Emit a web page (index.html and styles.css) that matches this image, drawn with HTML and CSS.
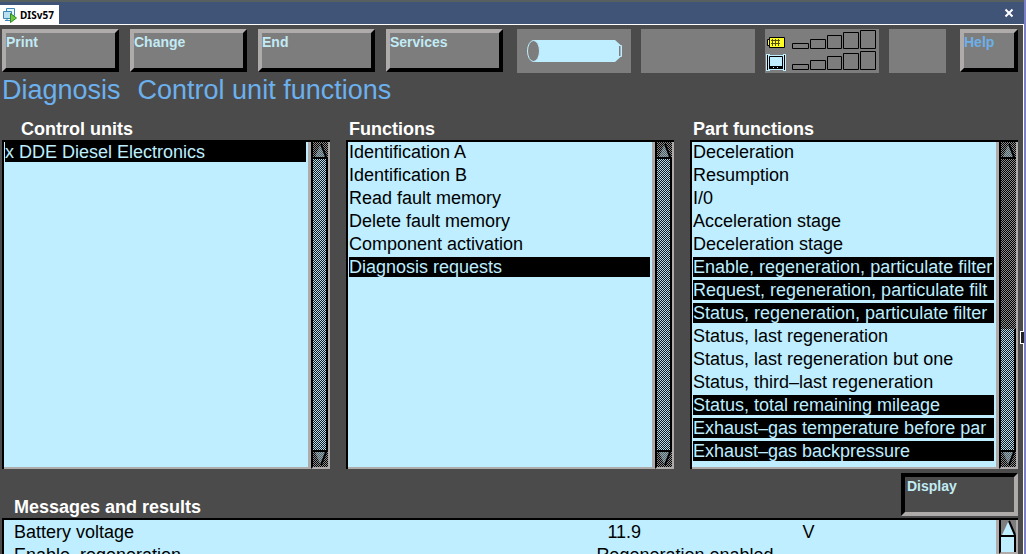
FILE: index.html
```html
<!DOCTYPE html>
<html lang="en">
<head>
<meta charset="utf-8">
<title>DISv57</title>
<link rel="stylesheet" href="styles.css">
</head>
<body>
<div class="app">
<header class="tabs">
  <button class="tab" type="button">
    <svg class="tab-icon" width="16" height="16" viewBox="0 0 16 16" aria-hidden="true">
      <path d="M4.500 1.500h8v7h-8z" fill="#e4f5fb" stroke="#3b86b5"/>
      <path d="M1.500 4.500h8v7h-8z" fill="#b9e0f0" stroke="#3b86b5"/>
      <path d="M3 13.500h6M5 11.500v2" stroke="#3b86b5"/>
      <path d="M8.500 6.500l6 4.500-6 4.500z" fill="#6cc83c" stroke="#2f8a28"/>
    </svg>
    <span>DISv57</span>
  </button>
  <button class="close" type="button" aria-label="Close">
    <svg width="10" height="10" viewBox="0 0 10 10" aria-hidden="true"><path d="M1.500 1.500l7 7M8.500 1.500l-7 7" stroke="#fff" stroke-width="2"/></svg>
  </button>
</header>
<main class="content">
  <div class="toolbar">
    <div class="actions">
      <button class="key" type="button">Print</button>
      <button class="key" type="button">Change</button>
      <button class="key" type="button">End</button>
      <button class="key" type="button">Services</button>
    </div>
    <div class="panels">
      <div class="panel">
        <svg width="114" height="44" viewBox="0 0 114 44" aria-hidden="true">
          <path d="M16 11H98L103.500 16V28L98 33H16z" fill="#beeeff"/>
          <ellipse cx="16.500" cy="22" rx="6" ry="10.500" fill="#7d7d7d" stroke="#beeeff"/>
          <path d="M103 16.500h1.500v11H103" fill="none" stroke="#beeeff"/>
          <path d="M102.500 17v10" stroke="#7d7d7d"/>
        </svg>
      </div>
      <div class="panel"></div>
      <div class="panel">
        <svg width="114" height="44" viewBox="0 0 114 44" aria-hidden="true">
          <path d="M4.500 8.500h15v10h-15z" fill="#ffff20" stroke="#000"/>
          <path d="M2.500 10.500h2v6h-2z" fill="#ffff20" stroke="#000"/>
          <path d="M7.500 10v7M10.500 10v7M13.500 10v7M6 11.500h9M6 14.500h9" stroke="#554d00"/>
          <path d="M1 25h4v1h13v-1h3v17h-3v-1H5v1H1z" fill="#beeeff"/>
          <path d="M2.500 26v15M19.500 26v15" stroke="#000"/>
          <path d="M4.500 27.500h13v12h-13z" fill="#beeeff" stroke="#000"/>
          <path d="M4 38.500h14" stroke="#000" stroke-width="3"/><path d="M8 38.500h1M12 38.500h1" stroke="#beeeff"/>
          <g fill="none" stroke="#000">
            <path d="M27.500 14.500h16v5h-16zM45.500 10.500h15v9h-15zM62.500 6.500h14v13h-14zM78.500 3.500h15v16h-15zM95.500 1.500h15v18h-15z"/>
            <path d="M27.500 35.500h16v5h-16zM45.500 31.500h15v9h-15zM62.500 27.500h14v13h-14zM78.500 24.500h15v16h-15zM95.500 22.500h15v18h-15z"/>
          </g>
        </svg>
      </div>
      <div class="panel panel-small"></div>
    </div>
    <button class="key key-help" type="button">Help</button>
  </div>

  <h1 class="title"><span>Diagnosis</span><span>Control unit functions</span></h1>

  <div class="columns">
    <section class="column">
      <h2 class="heading heading-indent" id="units">Control units</h2>
      <div class="box">
        <ul class="list" role="listbox" aria-labelledby="units">
          <li role="option" aria-selected="true">x DDE Diesel Electronics</li>
        </ul>
        <div class="scroll">
          <button class="arrow" type="button" aria-label="Up"><svg width="15" height="17" viewBox="0 0 15 17"><path d="M7.500 2L2 15h11z" class="dim"/><path d="M8 2l5 13M0 16h15" class="edge"/></svg></button>
          <div class="thumb"></div>
          <button class="arrow" type="button" aria-label="Down"><svg width="15" height="17" viewBox="0 0 15 17"><path d="M2 2h11L7.500 15z" class="dim"/><path d="M13 2L8 15M0 1h15" class="edge"/></svg></button>
        </div>
      </div>
    </section>
    <section class="column">
      <h2 class="heading" id="functions">Functions</h2>
      <div class="box">
        <ul class="list" role="listbox" aria-labelledby="functions">
          <li role="option">Identification A</li>
          <li role="option">Identification B</li>
          <li role="option">Read fault memory</li>
          <li role="option">Delete fault memory</li>
          <li role="option">Component activation</li>
          <li role="option" aria-selected="true">Diagnosis requests</li>
        </ul>
        <div class="scroll">
          <button class="arrow" type="button" aria-label="Up"><svg width="15" height="17" viewBox="0 0 15 17"><path d="M7.500 2L2 15h11z" class="dim"/><path d="M8 2l5 13M0 16h15" class="edge"/></svg></button>
          <div class="thumb"></div>
          <button class="arrow" type="button" aria-label="Down"><svg width="15" height="17" viewBox="0 0 15 17"><path d="M2 2h11L7.500 15z" class="dim"/><path d="M13 2L8 15M0 1h15" class="edge"/></svg></button>
        </div>
      </div>
    </section>
    <section class="column">
      <h2 class="heading" id="parts">Part functions</h2>
      <div class="box">
        <ul class="list" role="listbox" aria-multiselectable="true" aria-labelledby="parts">
          <li role="option">Deceleration</li>
          <li role="option">Resumption</li>
          <li role="option">I/0</li>
          <li role="option">Acceleration stage</li>
          <li role="option">Deceleration stage</li>
          <li role="option" aria-selected="true">Enable, regeneration, particulate filter</li>
          <li role="option" aria-selected="true">Request, regeneration, particulate filt</li>
          <li role="option" aria-selected="true">Status, regeneration, particulate filter</li>
          <li role="option">Status, last regeneration</li>
          <li role="option">Status, last regeneration but one</li>
          <li role="option">Status, third–last regeneration</li>
          <li role="option" aria-selected="true">Status, total remaining mileage</li>
          <li role="option" aria-selected="true">Exhaust–gas temperature before par</li>
          <li role="option" aria-selected="true">Exhaust–gas backpressure</li>
        </ul>
        <div class="scroll">
          <button class="arrow" type="button" aria-label="Up"><svg width="15" height="17" viewBox="0 0 15 17"><path d="M7.500 2L2 15h11z" class="dim"/><path d="M8 2l5 13M0 16h15" class="edge"/></svg></button>
          <div class="track"></div>
          <div class="thumb"></div>
          <button class="arrow" type="button" aria-label="Down"><svg width="15" height="17" viewBox="0 0 15 17"><path d="M2 2h11L7.500 15z" class="dim"/><path d="M13 2L8 15M0 1h15" class="edge"/></svg></button>
        </div>
      </div>
    </section>
  </div>

  <div class="results-bar">
    <h2 class="heading" id="results">Messages and results</h2>
    <button class="key key-pressed" type="button">Display</button>
  </div>
  <div class="box results">
    <div class="results-body">
      <table class="table" aria-labelledby="results">
        <tbody>
          <tr><td class="name">Battery voltage</td><td class="number">11.9</td><td>V</td></tr>
          <tr><td class="name">Enable, regeneration</td><td class="wide" colspan="2">Regeneration enabled</td></tr>
        </tbody>
      </table>
    </div>
    <div class="scroll">
      <button class="arrow" type="button" aria-label="Up"><svg width="15" height="17" viewBox="0 0 15 17"><path d="M7.500 1L1 15h13z" fill="#beeeff"/><path d="M8 1l6 14M0 16h15" class="edge"/></svg></button>
      <div class="thumb thumb-solid"></div>
    </div>
  </div>
</main>
<div class="handle"></div>
</div>
</body>
</html>
```
FILE: styles.css
```css
:root {
  --ground: #4b4b4b;
  --panel: #7d7d7d;
  --light: #b0abab;
  --ice: #beeeff;
}

* {
  box-sizing: border-box;
}

body {
  margin: 0;
  background: var(--ground);
  font-family: "Liberation Sans", Arial, sans-serif;
  font-size: 18px;
  color: #000;
}

button {
  font: inherit;
  margin: 0;
  padding: 0;
  border: 0;
  background: none;
}

svg {
  display: block;
}

.app {
  position: relative;
  display: flex;
  flex-direction: column;
  height: 100vh;
  overflow: hidden;
  border-right: 2px solid #7b7fc4;
}

.tabs {
  display: flex;
  justify-content: space-between;
  align-items: stretch;
  height: 25px;
  flex: none;
  padding-right: 8px;
  background: #405478;
  border-top: 2px solid #56615f;
  border-bottom: 1px solid #fff;
}

.tab {
  display: flex;
  align-items: center;
  gap: 2px;
  margin-top: 3px;
  padding: 0 5px 0 2px;
  background: #fff;
  font-family: "Noto Sans", sans-serif;
  font-size: 10px;
  font-weight: bold;
}

.close {
  padding: 0 2px;
}

.content {
  display: flex;
  flex-direction: column;
  flex: 1;
  min-height: 0;
  padding: 4px 5px 0 2px;
  border-right: 1px solid #fff;
}

.toolbar {
  display: flex;
  justify-content: space-between;
  height: 44px;
  flex: none;
}

.actions {
  display: flex;
  gap: 11px;
}

.panels {
  display: flex;
  gap: 10px;
}

.panel {
  width: 114px;
  background: var(--panel);
}

.panel-small {
  width: 57px;
}

.key {
  display: flex;
  width: 117px;
  height: 43px;
  border: 4px solid;
  border-color: var(--light) #000 #000 var(--light);
  background: var(--panel);
  color: #c2ebf5;
  font-size: 14px;
  line-height: 18px;
  font-weight: bold;
  text-align: left;
}

.key-help {
  width: 58px;
  color: #6cb0ea;
}

.key-pressed {
  border-color: #000 var(--light) var(--light) #000;
  padding-left: 2px;
  background: var(--ground);
}

.title {
  display: flex;
  gap: 17px;
  margin: 0;
  flex: none;
  color: #6cb0ee;
  font-size: 27px;
  line-height: 34px;
  font-weight: normal;
}

.columns {
  display: grid;
  grid-template-columns: repeat(3, 1fr);
  gap: 16px;
  margin-top: 11px;
}

.column {
  min-width: 0;
}

.heading {
  margin: 0;
  padding-left: 3px;
  color: #fff;
  font-size: 18px;
  line-height: 22px;
  font-weight: bold;
}

.heading-indent {
  padding-left: 19px;
}

.box {
  display: flex;
  background: var(--ice);
  border-top: 2px solid #000;
  border-left: 2px solid #000;
}

.list {
  flex: 1;
  min-width: 0;
  min-height: 327px;
  margin: 0;
  padding: 0 2px 3px 1px;
  list-style: none;
  border-right: 3px solid var(--light);
  border-bottom: 2px solid var(--light);
}

.list li {
  height: 20px;
  margin-bottom: 3px;
  line-height: 20px;
  white-space: nowrap;
  overflow: hidden;
}

.list li[aria-selected="true"] {
  background: #000;
  color: var(--ice);
}

.scroll {
  display: flex;
  flex-direction: column;
  flex: none;
  width: 19px;
  border-left: 2px solid #000;
  border-right: 2px solid var(--light);
  border-bottom: 2px solid var(--light);
}

.arrow,
.track {
  background: conic-gradient(#000 25%, #8c8c8c 0 50%, #000 0 75%, #8c8c8c 0) 0 0 / 2px 2px;
}

.track {
  flex: 169;
}

.thumb {
  flex: 121;
  border-right: 2px solid #000;
  background: conic-gradient(#151a20 25%, #b4dcec 0 50%, #151a20 0 75%, #b4dcec 0) 0 0 / 2px 2px;
}

.thumb-solid {
  background: var(--ice);
}

.dim {
  fill: #9fc3d0;
  fill-opacity: 0.5;
}

.edge {
  fill: none;
  stroke: #000;
  stroke-width: 2;
}

.results-bar {
  display: flex;
  justify-content: space-between;
  align-items: flex-end;
  padding: 4px 0 2px 9px;
}

.results-bar .heading {
  line-height: 18px;
}

.results {
  flex: 1;
  min-height: 0;
}

.results .arrow {
  background: var(--panel);
}

.results-body {
  flex: 1;
  padding: 1px 0 0 10px;
  border-right: 3px solid var(--light);
}

.table {
  width: 100%;
  table-layout: fixed;
  border-collapse: collapse;
}

.table td {
  height: 23px;
  padding: 0 0 0 3px;
  line-height: 23px;
}

.table .name {
  width: 59%;
  padding-left: 0;
}

.table .number {
  width: 21%;
  padding-left: 14px;
}

.handle {
  position: absolute;
  right: 0;
  top: 331px;
  width: 4px;
  height: 13px;
  border: 1px solid #fff;
  border-right: 0;
  background: #222;
}
```
